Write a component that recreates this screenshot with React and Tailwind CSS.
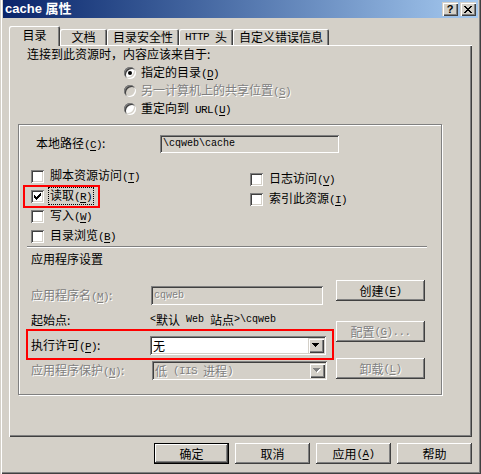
import React from "react";

const sunken =
  "shadow-[inset_1px_1px_0_#808080,inset_-1px_-1px_0_#ffffff,inset_2px_2px_0_#404040,inset_-2px_-2px_0_#d4d0c8]";
const raised =
  "shadow-[inset_-1px_-1px_0_#404040,inset_1px_1px_0_#ffffff,inset_-2px_-2px_0_#808080]";
const raisedCombo =
  "shadow-[inset_1px_1px_0_#d4d0c8,inset_2px_2px_0_#ffffff,inset_-1px_-1px_0_#404040,inset_-2px_-2px_0_#808080]";
const tabEdge =
  "shadow-[inset_1px_1px_0_#ffffff,inset_-1px_0_0_#404040,inset_-2px_0_0_#808080]";
const dim = "text-[#808080] [text-shadow:1px_1px_0_#ffffff]";
const mono = "font-['Liberation_Mono',monospace] text-[10px]";
const keyFont = "font-['Liberation_Mono',monospace] text-[11px] tracking-[-0.6px]";

function Key({ k }) {
  return (
    <span className={keyFont}>
      (<span className="underline underline-offset-2">{k}</span>)
    </span>
  );
}

function CheckBox({ checked }) {
  return (
    <span className={`w-[13px] h-[13px] shrink-0 bg-white flex items-center justify-center ${sunken}`}>
      {checked && (
        <svg width="7" height="7" viewBox="0 0 7 7" shapeRendering="crispEdges">
          <path
            d="M6 0h1v1h-1z M5 1h2v1h-2z M0 2h1v1h-1z M4 2h3v1h-3z M0 3h2v1h-2z M3 3h3v1h-3z M0 4h5v1h-5z M1 5h3v1h-3z M2 6h1v1h-1z"
            fill="#000"
          />
        </svg>
      )}
    </span>
  );
}

function CheckRow({ checked, focus, children }) {
  return (
    <div className="h-[20px] flex items-center">
      <CheckBox checked={checked} />
      <span
        className={`ml-[5px] px-[1px] leading-[13px] ${
          focus ? "outline outline-1 outline-dotted outline-black" : ""
        }`}
      >
        {children}
      </span>
    </div>
  );
}

function Radio({ checked, disabled, children }) {
  return (
    <div className="h-[18px] flex items-center">
      <span
        className={`w-[12px] h-[12px] rounded-full shrink-0 flex items-center justify-center shadow-[inset_1px_1px_0_#808080,inset_-1px_-1px_0_#ffffff,inset_2px_2px_0_#404040,inset_-2px_-2px_0_#d4d0c8] ${
          disabled ? "bg-[#d4d0c8]" : "bg-white"
        }`}
      >
        {checked && <span className="w-[4px] h-[4px] rounded-full bg-black" />}
      </span>
      <span className={`ml-[5px] ${disabled ? dim : ""}`}>{children}</span>
    </div>
  );
}

function Button({ children, disabled, primary, className }) {
  return (
    <div
      className={`${className} h-[21px] bg-[#d4d0c8] flex items-center justify-center ${
        primary
          ? "shadow-[inset_0_0_0_1px_#000000,inset_-2px_-2px_0_#404040,inset_2px_2px_0_#ffffff,inset_-3px_-3px_0_#808080]"
          : raised
      } ${disabled ? dim : ""}`}
    >
      {children}
    </div>
  );
}

function Select({ className, disabled, children }) {
  return (
    <div
      className={`${className} h-[19px] flex items-center pl-[3px] pr-[2px] ${sunken} ${
        disabled ? "bg-[#d4d0c8]" : "bg-white"
      }`}
    >
      <span className={`flex-1 flex items-center ${disabled ? dim : ""}`}>{children}</span>
      <span className={`w-[16px] h-[15px] bg-[#d4d0c8] flex items-center justify-center ${raisedCombo}`}>
        <svg width="8" height="5" viewBox="0 0 8 5" shapeRendering="crispEdges">
          {disabled && <path d="M1 1h7v1h-1v1h-1v1h-1v1h-1v-1h-1v-1h-1v-1h-1z" fill="#ffffff" />}
          <path d="M0 0h7v1h-1v1h-1v1h-1v1h-1v-1h-1v-1h-1v-1h-1z" fill={disabled ? "#808080" : "#000000"} />
        </svg>
      </span>
    </div>
  );
}

export default function App() {
  return (
    <div className="w-[481px] h-[474px] bg-[#d4d0c8] px-[3px] text-[12px] leading-[14px] text-black font-['Noto_Sans_CJK_SC',sans-serif] shadow-[inset_1px_0_0_#d4d0c8,inset_2px_0_0_#ffffff,inset_-1px_-1px_0_#404040,inset_-2px_-2px_0_#808080] overflow-hidden">
      {/* Title bar */}
      <div className="h-[18px] flex items-center pl-[2px] pr-[2px] bg-linear-to-r from-[#0a246a] to-[#a6caf0]">
        <span className="text-white font-bold text-[13px] leading-[16px] font-['Liberation_Sans','Noto_Sans_CJK_SC',sans-serif]">
          cache 属性
        </span>
        <div className="ml-auto flex gap-[2px]">
          <div className={`w-[16px] h-[14px] bg-[#d4d0c8] flex items-center justify-center font-bold text-[11px] leading-none font-['Liberation_Sans',sans-serif] ${raisedCombo}`}>
            ?
          </div>
          <div className={`w-[16px] h-[14px] bg-[#d4d0c8] flex items-center justify-center ${raisedCombo}`}>
            <svg width="8" height="7" viewBox="0 0 8 7" shapeRendering="crispEdges">
              <path
                d="M0 0h2v1h-2z M6 0h2v1h-2z M1 1h2v1h-2z M5 1h2v1h-2z M2 2h4v1h-4z M3 3h2v1h-2z M2 4h4v1h-4z M1 5h2v1h-2z M5 5h2v1h-2z M0 6h2v1h-2z M6 6h2v1h-2z"
                fill="#000"
              />
            </svg>
          </div>
        </div>
      </div>

      {/* Tabs */}
      <div className="ml-[6px] mt-[8px] h-[19px] flex items-end">
        <div className={`relative z-10 w-[51px] h-[20px] mb-[-1px] pb-[2px] bg-[#d4d0c8] rounded-t-[2px] flex items-center justify-center ${tabEdge}`}>
          目录
        </div>
        <div className={`w-[47px] h-[16px] rounded-t-[2px] flex items-center justify-center ${tabEdge}`}>文档</div>
        <div className={`w-[72px] h-[16px] rounded-t-[2px] flex items-center justify-center ${tabEdge}`}>目录安全性</div>
        <div className={`w-[54px] h-[16px] rounded-t-[2px] flex items-center justify-center ${tabEdge}`}>
          <span className={keyFont}>HTTP&nbsp;</span>头
        </div>
        <div className={`w-[96px] h-[16px] rounded-t-[2px] flex items-center justify-center ${tabEdge}`}>自定义错误信息</div>
      </div>

      {/* Panel */}
      <div className="ml-[6px] w-[463px] h-[392px] pt-[2px] shadow-[inset_1px_1px_0_#ffffff,inset_-1px_-1px_0_#404040,inset_-2px_-2px_0_#808080]">
        <div className="ml-[18px] h-[14px]">连接到此资源时，内容应该来自于:</div>

        <div className="ml-[115px] mt-[3px]">
          <Radio checked>
            指定的目录<Key k="D" />
          </Radio>
          <Radio disabled>
            另一计算机上的共享位置<Key k="S" />
          </Radio>
          <Radio>
            重定向到<span className={keyFont}>&nbsp;URL</span>
            <Key k="U" />
          </Radio>
        </div>

        {/* Group box */}
        <div className="mt-[6px] ml-[9px] w-[424px] h-[271px] border border-[#808080] shadow-[inset_1px_1px_0_#ffffff,1px_1px_0_#ffffff]">
          <div className="mt-[10px] pl-[17px] h-[18px] flex items-center">
            <span className="w-[124px]">
              本地路径<Key k="C" />:
            </span>
            <div className={`w-[179px] h-[18px] flex items-center pl-[3px] bg-[#d4d0c8] ${sunken} ${mono}`}>
              \cqweb\cache
            </div>
          </div>

          <div className="mt-[13px] flex items-start">
            <div className="ml-[12px] w-[219px]">
              <CheckRow>
                脚本资源访问<Key k="T" />
              </CheckRow>
              <div className="relative">
                <CheckRow checked focus>
                  读取<Key k="R" />
                </CheckRow>
                <div className="absolute left-[-8px] top-[-1px] w-[77px] h-[23px] border-2 border-[#ff0000] pointer-events-none" />
              </div>
              <CheckRow>
                写入<Key k="W" />
              </CheckRow>
              <CheckRow>
                目录浏览<Key k="B" />
              </CheckRow>
            </div>
            <div className="mt-[3px]">
              <CheckRow>
                日志访问<Key k="V" />
              </CheckRow>
              <CheckRow>
                索引此资源<Key k="I" />
              </CheckRow>
            </div>
          </div>

          <div className="ml-[8px] w-[400px] h-[2px] border-t border-[#808080] border-b border-b-white" />

          <div className="mt-[4px] ml-[12px] h-[14px]">应用程序设置</div>

          <div className="mt-[14px] flex items-start">
            <div className="ml-[12px] w-[305px] pt-[6px]">
              <div className="h-[19px] flex items-center">
                <span className={`w-[120px] ${dim}`}>
                  应用程序名<Key k="M" />:
                </span>
                <div className={`w-[172px] h-[19px] flex items-center pl-[3px] bg-[#d4d0c8] ${sunken} ${mono} ${dim}`}>
                  cqweb
                </div>
              </div>
              <div className="mt-[6px] h-[18px] flex items-center">
                <span className="w-[119px]">起始点:</span>
                <span className="flex items-center">
                  <span className={mono}>&lt;</span>默认<span className={mono}>&nbsp;Web&nbsp;</span>站点
                  <span className={mono}>&gt;\cqweb</span>
                </span>
              </div>
              <div className="relative mt-[7px] h-[19px] flex items-center">
                <span className="w-[119px]">
                  执行许可<Key k="P" />:
                </span>
                <Select className="w-[176px]">无</Select>
                <div className="absolute left-[-5px] top-[-7px] w-[308px] h-[31px] border-2 border-[#ff0000] pointer-events-none" />
              </div>
              <div className="mt-[6px] h-[19px] flex items-center">
                <span className={`w-[121px] ${dim}`}>
                  应用程序保护<Key k="N" />:
                </span>
                <Select className="w-[175px]" disabled>
                  低<span className={keyFont}>&nbsp;(IIS&nbsp;</span>进程<span className={keyFont}>)</span>
                </Select>
              </div>
            </div>
            <div className="w-[89px]">
              <Button className="w-[89px]">
                创建<Key k="E" />
              </Button>
              <Button className="w-[89px] mt-[20px]" disabled>
                配置<Key k="G" />
                <span className={keyFont}>...</span>
              </Button>
              <Button className="w-[89px] mt-[16px]" disabled>
                卸载<Key k="L" />
              </Button>
            </div>
          </div>
        </div>
      </div>

      {/* Dialog buttons */}
      <div className="ml-[6px] w-[463px] mt-[6px] flex justify-end gap-[6px]">
        <Button className="w-[75px]" primary>
          确定
        </Button>
        <Button className="w-[75px]">取消</Button>
        <Button className="w-[75px]">
          应用<Key k="A" />
        </Button>
        <Button className="w-[75px]">帮助</Button>
      </div>
    </div>
  );
}
